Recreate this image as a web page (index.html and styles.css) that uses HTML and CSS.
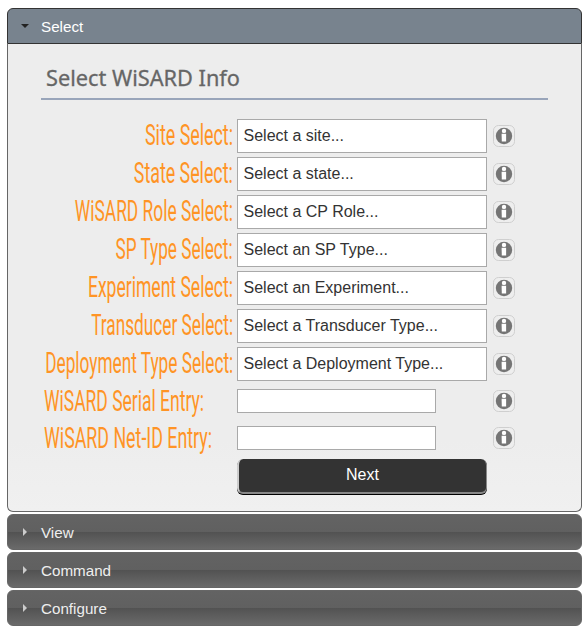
FILE: index.html
```html
<!DOCTYPE html>
<html lang="en">
<head>
<meta charset="utf-8">
<title>WiSARD Info</title>
<link rel="stylesheet" href="styles.css">
</head>
<body>
<svg width="0" height="0" class="defs" aria-hidden="true">
  <symbol id="info" viewBox="0 0 22 22">
    <rect x=".5" y=".5" width="21" height="21" rx="5" fill="#eeeeee" stroke="#cfcfcf"/>
    <circle cx="11" cy="11" r="8.2" fill="#757575"/>
    <circle cx="11" cy="5.9" r="2.2" fill="#fff"/>
    <path d="M8.6 8.8h4.5v7.8H8.8z" fill="#fff"/>
  </symbol>
</svg>
<div class="accordion">
  <h3 class="header active"><i class="arrow down"></i>Select</h3>
  <div class="panel">
    <h2 class="title"><span class="fit" data-width="194">Select WiSARD Info</span></h2>
    <div class="row"><label class="label"><span class="fit" data-width="88">Site Select:</span></label><div class="select">Select a site...</div><svg class="info"><use href="#info"/></svg></div>
    <div class="row"><label class="label"><span class="fit" data-width="99">State Select:</span></label><div class="select">Select a state...</div><svg class="info"><use href="#info"/></svg></div>
    <div class="row"><label class="label"><span class="fit" data-width="158">WiSARD Role Select:</span></label><div class="select">Select a CP Role...</div><svg class="info"><use href="#info"/></svg></div>
    <div class="row"><label class="label"><span class="fit" data-width="117">SP Type Select:</span></label><div class="select">Select an SP Type...</div><svg class="info"><use href="#info"/></svg></div>
    <div class="row"><label class="label"><span class="fit" data-width="145">Experiment Select:</span></label><div class="select">Select an Experiment...</div><svg class="info"><use href="#info"/></svg></div>
    <div class="row"><label class="label"><span class="fit" data-width="142">Transducer Select:</span></label><div class="select">Select a Transducer Type...</div><svg class="info"><use href="#info"/></svg></div>
    <div class="row"><label class="label"><span class="fit" data-width="188">Deployment Type Select:</span></label><div class="select">Select a Deployment Type...</div><svg class="info"><use href="#info"/></svg></div>
    <div class="row short"><label class="label"><span class="fit" data-width="160">WiSARD Serial Entry:</span></label><input class="entry" type="text"><svg class="info"><use href="#info"/></svg></div>
    <div class="row short"><label class="label"><span class="fit" data-width="168">WiSARD Net-ID Entry:</span></label><input class="entry" type="text"><svg class="info"><use href="#info"/></svg></div>
    <button class="next">Next</button>
  </div>
  <h3 class="header"><i class="arrow"></i>View</h3>
  <h3 class="header"><i class="arrow"></i>Command</h3>
  <h3 class="header"><i class="arrow"></i>Configure</h3>
</div>
<script src="fit.js"></script>
</body>
</html>
```
FILE: fit.js
```js
// Condense each heading or label to its data-width.
document.querySelectorAll(".fit").forEach(function (el) {
  var natural = el.getBoundingClientRect().width;
  el.style.transform = "scaleX(" + Number(el.dataset.width) / natural + ")";
});
```
FILE: styles.css
```css
* { box-sizing: border-box; }
body {
  margin: 0;
  background: #fff;
  font-family: "Liberation Sans", Arial, sans-serif;
}
.defs { display: none; }
.accordion { width: 575px; margin: 8px 0 0 7px; }
.header {
  display: flex;
  align-items: center;
  height: 36px;
  margin: 2px 0 0;
  padding-left: 14px;
  border: 1px solid #666;
  border-radius: 6px;
  background: linear-gradient(#636363 0, #606060 50%, #525252 50%, #6a6a6a 100%);
  color: #eee;
  font-size: 15.2px;
  font-weight: 400;
}
.header.active {
  margin: 0;
  border-color: #333;
  border-radius: 6px 6px 0 0;
  background: #78838e;
  color: #fff;
}
.arrow {
  width: 4px;
  height: 8px;
  margin: 0 14px 0 1px;
  background: #ccc;
  clip-path: polygon(0 0, 100% 50%, 0 100%);
}
.arrow.down {
  width: 8px;
  height: 4px;
  margin: 0 12px 0 -1px;
  background: #222;
  clip-path: polygon(0 0, 100% 0, 50% 100%);
}
.panel {
  height: 468px;
  padding: 19px 33px 0;
  border: 1px solid #666;
  border-top: 0;
  border-radius: 0 0 6px 6px;
  background: linear-gradient(#ededed 0, #ededed 85%, #f0f0f0 100%);
}
.title {
  height: 37px;
  margin: 0 0 17px;
  padding-left: 5px;
  border-bottom: 2px solid #99a5ba;
  color: #666;
  font: 400 22.5px/30px "Noto Sans", sans-serif;
  -webkit-text-stroke: .3px #666;
}
.fit {
  display: inline-block;
  flex: none;
  white-space: nowrap;
  transform-origin: left center;
}
.row {
  display: grid;
  grid-template-columns: 196px 250px 28px;
  align-items: center;
  height: 38px;
}
.row.short {
  align-items: start;
  height: 37px;
}
.label {
  display: flex;
  justify-content: flex-end;
  width: 192px;
  height: 38px;
  color: #ff9425;
  font: 400 30px/35px Roboto, sans-serif;
}
.label .fit { transform-origin: right center; }
.short .label {
  justify-content: flex-start;
  padding-left: 3px;
}
.short .label .fit { transform-origin: left center; }
.select {
  height: 34px;
  padding-left: 5.5px;
  border: 1px solid #a9a9a9;
  background: #fff;
  color: #333;
  font-size: 16px;
  line-height: 31px;
}
.entry {
  width: 199px;
  height: 24px;
  margin: 6px 0 0;
  padding: 0 4px;
  border: 1px solid #a9a9a9;
  background: #fff;
}
.info { width: 22px; height: 22px; margin-left: 6px; }
.short .info { margin-top: 7px; }
.next {
  display: block;
  width: 250px;
  height: 35px;
  margin: 2px 0 0 196px;
  padding: 0 0 2px;
  border: solid;
  border-width: 0 1px 2px 2px;
  border-color: #888 #888 #888 #ccc;
  border-radius: 6px;
  background: #333;
  box-shadow: 0 1px 0 #000;
  color: #fff;
  font: 16px "Liberation Sans", Arial, sans-serif;
}
```
